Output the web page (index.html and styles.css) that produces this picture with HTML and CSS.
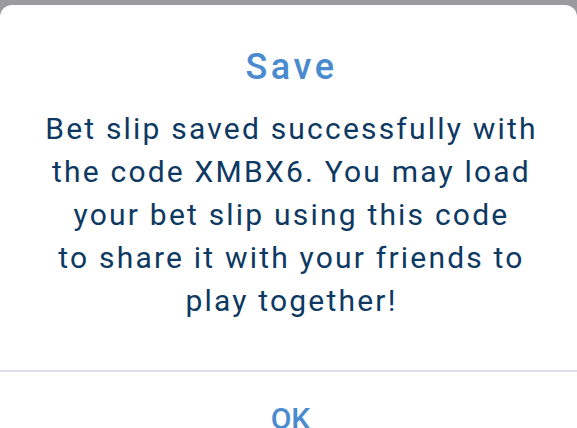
FILE: index.html
```html
<!DOCTYPE html>
<html>
<head>
<meta charset="utf-8">
<link rel="stylesheet" href="styles.css">
</head>
<body>
<div class="dialog">
  <h1 class="title">Save</h1>
  <p class="message">Bet slip saved successfully with<br>the code XMBX6. You may load<br>your bet slip using this code<br>to share it with your friends to<br>play together!</p>
  <div class="divider"></div>
  <div class="actions"><button class="ok">OK</button></div>
</div>
</body>
</html>
```
FILE: styles.css
```css
html, body {
  margin: 0;
  padding: 0;
  height: 100%;
}
body {
  background: #9b9b9d;
  font-family: Roboto, "Noto Sans", sans-serif;
  overflow: hidden;
}
.dialog {
  margin-top: 5px;
  background: #ffffff;
  border-radius: 12px 12px 0 0;
  height: calc(100% - 5px);
  display: flex;
  flex-direction: column;
  align-items: stretch;
  overflow: hidden;
}
.dialog > * {
  flex-shrink: 0;
}
.title {
  margin: 42px 0 0 6px;
  font-size: 36px;
  line-height: 40px;
  font-weight: 500;
  letter-spacing: 3.5px;
  color: #4a8bd0;
  text-align: center;
}
.message {
  margin: 20px 4px 0 10px;
  font-size: 30px;
  line-height: 43px;
  font-weight: 400;
  letter-spacing: 2.2px;
  color: #0d3962;
  text-align: center;
}
.divider {
  margin-top: 48px;
  height: 2px;
  background: #dedfe8;
}
.actions {
  display: flex;
  justify-content: center;
  padding-left: 4px;
}
.ok {
  margin-top: 29px;
  border: none;
  background: none;
  padding: 0;
  font-family: Roboto, "Noto Sans", sans-serif;
  font-size: 30px;
  line-height: 35px;
  font-weight: 500;
  color: #4a8bd0;
}
```
